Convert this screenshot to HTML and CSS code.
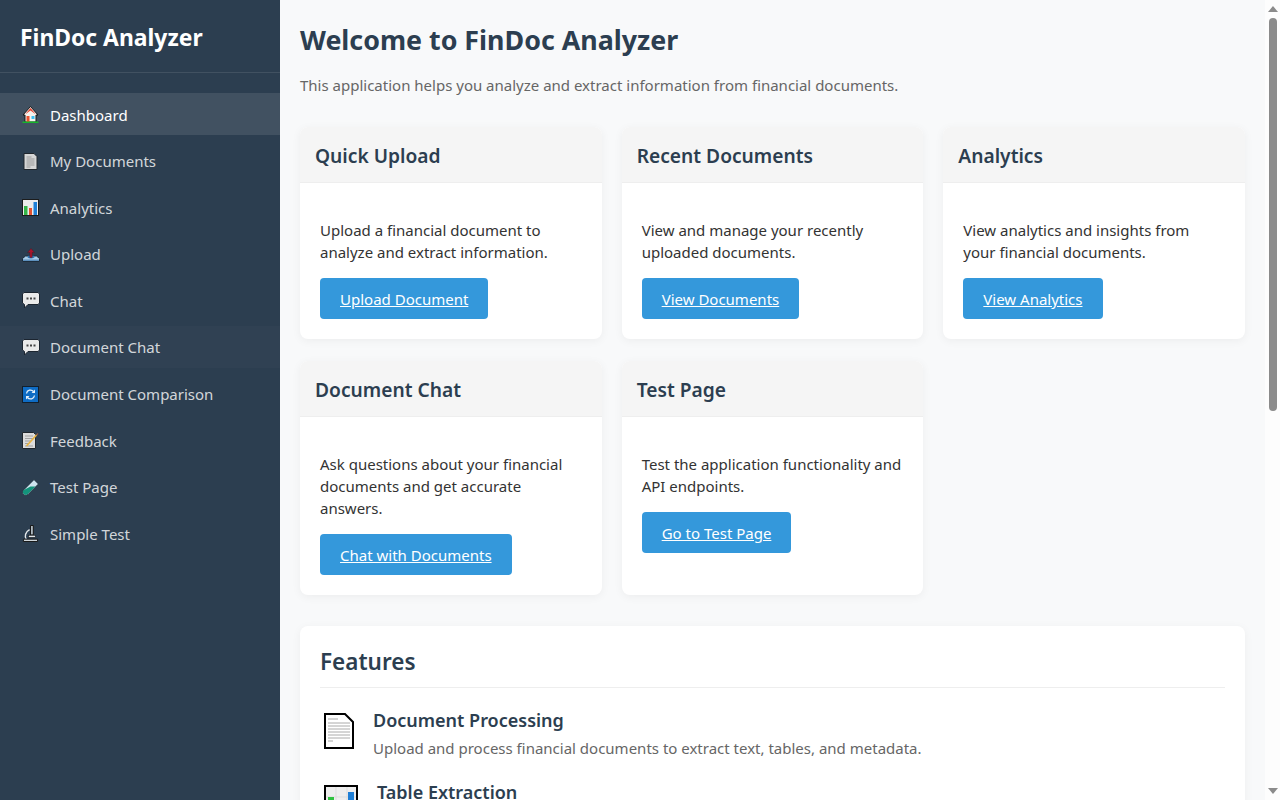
FILE: index.html
```html
<!DOCTYPE html>
<html lang="en">
<head>
  <meta charset="UTF-8">
  <meta name="viewport" content="width=device-width, initial-scale=1.0">
  <title>FinDoc Analyzer</title>
  <link rel="stylesheet" href="styles.css">
</head>
<body>
  <div class="app">
    <aside class="sidebar">
      <div class="sidebar-header">FinDoc Analyzer</div>
      <nav class="nav">
        <a class="nav-item active" href="#">
          <svg class="nav-icon" viewBox="0 0 16 17"><path d="M8 .5 .5 9h2v7h11V9h2z" fill="#f6f3ee" stroke="#161616"/><path d="M8 2 2.500 8.500 8 4.500l5.500 4z" fill="#e0402e"/><rect x="4" y="10" width="3" height="6" fill="#e8502f"/><rect x="9" y="10" width="3" height="3" fill="#3cc0f2"/><rect x="0" y="15.500" width="16" height="1.500" fill="#17b52c"/></svg>
          <span>Dashboard</span>
        </a>
        <a class="nav-item" href="#">
          <svg class="nav-icon" viewBox="0 0 16 17"><path d="M1.500 .5h10l3 3v13h-13z" fill="#d6d6d6" stroke="#20262c"/><path d="M4 4h5M4 6h8M4 8h8M4 10h8M4 12h8M4 14h4" stroke="#9a9a9a"/></svg>
          <span>My Documents</span>
        </a>
        <a class="nav-item" href="#">
          <svg class="nav-icon" viewBox="0 0 17 17"><rect x=".5" y=".5" width="16" height="16" fill="#ececec" stroke="#1c1c1c"/><rect x="2" y="7" width="3.500" height="9" fill="#35b548"/><rect x="7" y="9" width="3" height="7" fill="#e4512f"/><rect x="11.500" y="3" width="3.500" height="13" fill="#1f7fd6"/></svg>
          <span>Analytics</span>
        </a>
        <a class="nav-item" href="#">
          <svg class="nav-icon chat" viewBox="0 0 18 17"><path d="M.5 15.500v-3l3-2.500h11l3 2.500v3z" fill="#a9cbe6" stroke="#1d2c3a"/><rect x="1" y="13.500" width="16" height="1.500" fill="#5d90bd"/><ellipse cx="9" cy="11" rx="3.500" ry="1.400" fill="#2f78b7"/><path d="M9 2.500 5.500 6.500h2.300v5h2.400v-5h2.300z" fill="#a8142b" stroke="#3a1a24" stroke-width=".4"/></svg>
          <span>Upload</span>
        </a>
        <a class="nav-item" href="#">
          <svg class="nav-icon chat" viewBox="0 0 18 17"><path d="M2 .5h14l1.500 1.500v9L16 12.500H6L2.500 16v-3.500L.5 11V2z" fill="#eaeaea" stroke="#1c2530"/><rect x="4.500" y="5.500" width="2" height="2" fill="#444"/><rect x="8" y="5.500" width="2" height="2" fill="#444"/><rect x="11.500" y="5.500" width="2" height="2" fill="#444"/></svg>
          <span>Chat</span>
        </a>
        <a class="nav-item tinted" href="#">
          <svg class="nav-icon chat" viewBox="0 0 18 17"><path d="M2 .5h14l1.500 1.500v9L16 12.500H6L2.500 16v-3.500L.5 11V2z" fill="#eaeaea" stroke="#1c2530"/><rect x="4.500" y="5.500" width="2" height="2" fill="#444"/><rect x="8" y="5.500" width="2" height="2" fill="#444"/><rect x="11.500" y="5.500" width="2" height="2" fill="#444"/></svg>
          <span>Document Chat</span>
        </a>
        <a class="nav-item" href="#">
          <svg class="nav-icon" viewBox="0 0 17 17"><rect x=".5" y=".5" width="16" height="16" fill="#0f6cc4" stroke="#12202e"/><path d="M4.500 7.500a4 4 0 0 1 7-2M12.500 9.500a4 4 0 0 1-7 2" fill="none" stroke="#e8f2fb" stroke-width="1.300"/><path d="M13 3.500v3.500H9.500zM4 13.500V10h3.500z" fill="#e8f2fb"/></svg>
          <span>Document Comparison</span>
        </a>
        <a class="nav-item" href="#">
          <svg class="nav-icon" viewBox="0 0 17 17"><path d="M.5 .5h11l2 2v14H.5z" fill="#dcdcdc" stroke="#20262c"/><path d="M3 4h8M3 6.500h8M3 9h6M3 11.500h4M3 14h8" stroke="#a0a0a0"/><path d="M4.500 14 14.500 3" stroke="#e9b33f" stroke-width="1.600"/><path d="M14.500 3 16 1.500" stroke="#8a5a44" stroke-width="1.600"/></svg>
          <span>Feedback</span>
        </a>
        <a class="nav-item" href="#">
          <svg class="nav-icon" viewBox="0 0 17 17"><path d="M12 .5l4.500 4.500-10.500 10.500a3 3 0 0 1-4.500-4.500z" fill="#cfe3ee" stroke="#1d2c3a"/><path d="M8.500 7.500h5L5.800 15a2.700 2.700 0 0 1-4-4z" fill="#14937b"/></svg>
          <span>Test Page</span>
        </a>
        <a class="nav-item" href="#">
          <svg class="nav-icon" viewBox="0 0 16 18"><path d="M8 .5h3v10H8z" fill="#aeb8bf" stroke="#111"/><path d="M7 5C2.500 7.500 1.500 12 3.500 15" fill="none" stroke="#e3e7ea" stroke-width="1.500"/><path d="M.5 15h15v2.500H.5z" fill="#d0d6da" stroke="#111"/><rect x="6" y="11" width="7" height="2" fill="#e3e7ea" stroke="#111" stroke-width=".5"/></svg>
          <span>Simple Test</span>
        </a>
      </nav>
    </aside>

    <main class="main">
      <h1 class="page-title">Welcome to FinDoc Analyzer</h1>
      <p class="page-intro">This application helps you analyze and extract information from financial documents.</p>

      <section class="card-grid">
        <div class="card">
          <h3 class="card-header">Quick Upload</h3>
          <div class="card-body">
            <p>Upload a financial document to analyze and extract information.</p>
            <a class="btn" href="#">Upload Document</a>
          </div>
        </div>
        <div class="card">
          <h3 class="card-header">Recent Documents</h3>
          <div class="card-body">
            <p>View and manage your recently uploaded documents.</p>
            <a class="btn" href="#">View Documents</a>
          </div>
        </div>
        <div class="card">
          <h3 class="card-header">Analytics</h3>
          <div class="card-body">
            <p>View analytics and insights from your financial documents.</p>
            <a class="btn" href="#">View Analytics</a>
          </div>
        </div>
        <div class="card">
          <h3 class="card-header">Document Chat</h3>
          <div class="card-body">
            <p>Ask questions about your financial documents and get accurate answers.</p>
            <a class="btn" href="#">Chat with Documents</a>
          </div>
        </div>
        <div class="card">
          <h3 class="card-header">Test Page</h3>
          <div class="card-body">
            <p>Test the application functionality and API endpoints.</p>
            <a class="btn" href="#">Go to Test Page</a>
          </div>
        </div>
      </section>

      <section class="features">
        <h2 class="features-title">Features</h2>
        <div class="feature">
          <svg class="feature-icon" viewBox="0 0 30 36"><path d="M1 1h20l8 8v26H1z" fill="#fff" stroke="#000" stroke-width="2"/><path d="M4 6h10M4 10h22M4 13h22M4 16h22M4 19h22M4 22h22M4 25h22M4 28h5" stroke="#aaa"/></svg>
          <div>
            <h4 class="feature-name">Document Processing</h4>
            <p class="feature-text">Upload and process financial documents to extract text, tables, and metadata.</p>
          </div>
        </div>
        <div class="feature">
          <svg class="feature-icon wide" viewBox="0 0 34 36"><rect x="1" y="1" width="32" height="34" fill="#eee" stroke="#000" stroke-width="2"/><path d="M12 2v32M23 2v32M2 12h30M2 23h30" stroke="#ddd"/><rect x="4" y="12" width="6" height="22" fill="#2fc23f"/><rect x="24" y="7" width="6" height="27" fill="#1f7fd6"/></svg>
          <div>
            <h4 class="feature-name">Table Extraction</h4>
            <p class="feature-text">Automatically detect and extract tables from your financial documents.</p>
          </div>
        </div>
      </section>
    </main>

    <div class="scrollbar">
      <span class="scroll-arrow up"></span>
      <span class="scroll-thumb"></span>
      <span class="scroll-arrow down"></span>
    </div>
  </div>
</body>
</html>
```

FILE: styles.css
```css
* {
  box-sizing: border-box;
}

body {
  margin: 0;
  font-family: "Noto Sans", "Open Sans", sans-serif;
  color: #2c3e50;
  background: #f8f9fa;
}

.app {
  display: flex;
  height: 100vh;
  overflow: hidden;
}

/* Sidebar */
.sidebar {
  width: 280px;
  flex-shrink: 0;
  background: #2c3e50;
  color: #fff;
}

.sidebar-header {
  height: 73px;
  padding: 20px;
  font-size: 22.900px;
  font-weight: 700;
  line-height: 36px;
  border-bottom: 1px solid rgba(255, 255, 255, 0.1);
}

.nav {
  display: flex;
  flex-direction: column;
  padding-top: 20px;
}

.nav-item {
  display: flex;
  align-items: center;
  gap: 12px;
  height: 42px;
  margin-bottom: 4.600px;
  padding: 1px 22px 0;
  color: rgba(255, 255, 255, 0.8);
  font-size: 15px;
  text-decoration: none;
}

.nav-item.active {
  background: rgba(255, 255, 255, 0.1);
  color: #fff;
}

.nav-item.tinted {
  background: rgba(255, 255, 255, 0.02);
}

.nav-icon {
  width: 17px;
  height: 17px;
  margin-right: -1px;
  flex-shrink: 0;
}

.nav-icon.chat {
  width: 18px;
  margin-right: -2px;
}

/* Main area */
.main {
  flex: 1;
  min-width: 0;
  height: 100vh;
  padding: 20px;
}

.page-title {
  margin: 0 0 14px;
  font-size: 26.800px;
  line-height: 40px;
  font-weight: 700;
}

.page-intro {
  margin: 0 0 31px;
  font-size: 15px;
  line-height: 22px;
  color: #666;
}

.card-grid {
  display: grid;
  grid-template-columns: repeat(3, 1fr);
  gap: 22px 20px;
}

.card {
  background: #fff;
  border-radius: 8px;
  box-shadow: 0 2px 10px rgba(0, 0, 0, 0.05);
  overflow: hidden;
}

.card-header {
  margin: 0;
  padding: 14.500px 15px;
  height: 56px;
  background: #f5f5f5;
  border-bottom: 1px solid #eee;
  font-size: 19.200px;
  line-height: 27px;
  font-weight: 600;
}

.card-body {
  padding: 36px 20px 20px;
}

.card-body p {
  margin: 0 0 15px;
  font-size: 15px;
  line-height: 22px;
  color: #333;
}

.btn {
  display: inline-block;
  padding: 11px 20px 9px;
  background: #3498db;
  border-radius: 4px;
  color: #fff;
  font-size: 15px;
  line-height: 21px;
  text-decoration: underline;
}

.features {
  margin-top: 31px;
  padding: 20px;
  background: #fff;
  border-radius: 8px;
  box-shadow: 0 2px 10px rgba(0, 0, 0, 0.05);
}

.features-title {
  margin: 0 0 20px;
  padding-bottom: 9px;
  border-bottom: 1px solid #eee;
  font-size: 22.500px;
  line-height: 32px;
  font-weight: 600;
}

.feature {
  display: flex;
  align-items: flex-start;
  gap: 19px;
  margin-bottom: 20px;
}

.feature-icon {
  width: 30px;
  height: 36px;
  margin: 5px 0 0 4px;
  flex-shrink: 0;
}

.feature-icon.wide {
  width: 34px;
}

.feature-name {
  margin: 0 0 4px;
  font-size: 18px;
  line-height: 24px;
  font-weight: 600;
}

.feature-text {
  margin: 0;
  font-size: 15px;
  line-height: 24px;
  color: #666;
}

/* Scrollbar drawn by hand, the screenshot browser hides its own */
.scrollbar {
  display: flex;
  flex-direction: column;
  align-items: center;
  width: 15px;
  flex-shrink: 0;
  background: #fdfdfd;
}

.scroll-arrow {
  width: 0;
  height: 0;
  border-left: 5.500px solid transparent;
  border-right: 5.500px solid transparent;
}

.scroll-arrow.up {
  margin-top: 6px;
  border-bottom: 6px solid #8b8b8b;
}

.scroll-arrow.down {
  margin-top: auto;
  margin-bottom: 6px;
  border-top: 6px solid #8b8b8b;
}

.scroll-thumb {
  width: 8px;
  height: 393px;
  margin-top: 6px;
  background: #8b8b8b;
  border-radius: 4px;
}
```
